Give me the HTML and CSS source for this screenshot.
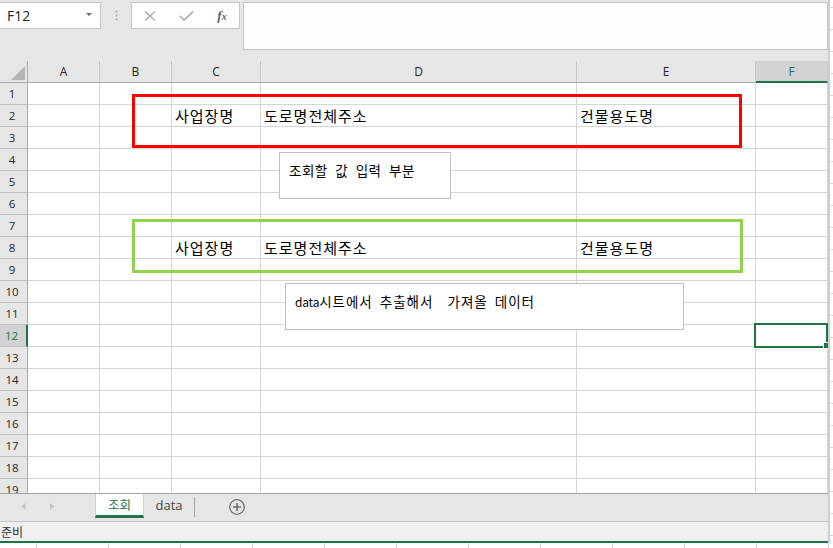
FILE: index.html
```html
<!DOCTYPE html>
<html lang="ko">
<head>
<meta charset="utf-8">
<title>조회 - Excel</title>
<link rel="stylesheet" href="styles.css">
</head>
<body>
<div class="screen">
  <div class="window">
    <div class="main">
      <div class="formula-bar">
        <div class="name-box"><span class="name">F12</span><span class="caret"></span></div>
        <div class="grip">
          <svg width="3" height="12" viewBox="0 0 3 12"><circle cx="1.5" cy="1.5" r="1" fill="#a9a9a9"/><circle cx="1.5" cy="5.5" r="1" fill="#a9a9a9"/><circle cx="1.5" cy="9.5" r="1" fill="#a9a9a9"/></svg>
        </div>
        <div class="fx-box">
          <svg class="ico" width="12" height="10" viewBox="0 0 12 10"><path d="M1 0.5 L11 9.5 M11 0.5 L1 9.5" stroke="#a6a6a6" stroke-width="1.3" fill="none"/></svg>
          <svg class="ico" width="15" height="10" viewBox="0 0 15 10"><path d="M0.8 5 L5 9 L14.2 0.6" stroke="#a6a6a6" stroke-width="1.5" fill="none"/></svg>
          <span class="fx">f<small>x</small></span>
        </div>
        <div class="formula-input"></div>
      </div>

      <div class="sheet">
        <div class="corner"><span class="corner-tri"></span></div>
        <div class="ch">A</div><div class="ch">B</div><div class="ch">C</div><div class="ch">D</div><div class="ch">E</div><div class="ch sel">F</div>

        <div class="rh">1</div><div class="c"></div><div class="c"></div><div class="c"></div><div class="c"></div><div class="c"></div><div class="c"></div>
        <div class="rh">2</div><div class="c"></div><div class="c"></div><div class="c t">사업장명</div><div class="c t">도로명전체주소</div><div class="c t">건물용도명</div><div class="c"></div>
        <div class="rh">3</div><div class="c"></div><div class="c"></div><div class="c"></div><div class="c"></div><div class="c"></div><div class="c"></div>
        <div class="rh">4</div><div class="c"></div><div class="c"></div><div class="c"></div><div class="c"></div><div class="c"></div><div class="c"></div>
        <div class="rh">5</div><div class="c"></div><div class="c"></div><div class="c"></div><div class="c"></div><div class="c"></div><div class="c"></div>
        <div class="rh">6</div><div class="c"></div><div class="c"></div><div class="c"></div><div class="c"></div><div class="c"></div><div class="c"></div>
        <div class="rh">7</div><div class="c"></div><div class="c"></div><div class="c"></div><div class="c"></div><div class="c"></div><div class="c"></div>
        <div class="rh">8</div><div class="c"></div><div class="c"></div><div class="c t">사업장명</div><div class="c t">도로명전체주소</div><div class="c t">건물용도명</div><div class="c"></div>
        <div class="rh">9</div><div class="c"></div><div class="c"></div><div class="c"></div><div class="c"></div><div class="c"></div><div class="c"></div>
        <div class="rh">10</div><div class="c"></div><div class="c"></div><div class="c"></div><div class="c"></div><div class="c"></div><div class="c"></div>
        <div class="rh">11</div><div class="c"></div><div class="c"></div><div class="c"></div><div class="c"></div><div class="c"></div><div class="c"></div>
        <div class="rh sel">12</div><div class="c"></div><div class="c"></div><div class="c"></div><div class="c"></div><div class="c"></div><div class="c"></div>
        <div class="rh">13</div><div class="c"></div><div class="c"></div><div class="c"></div><div class="c"></div><div class="c"></div><div class="c"></div>
        <div class="rh">14</div><div class="c"></div><div class="c"></div><div class="c"></div><div class="c"></div><div class="c"></div><div class="c"></div>
        <div class="rh">15</div><div class="c"></div><div class="c"></div><div class="c"></div><div class="c"></div><div class="c"></div><div class="c"></div>
        <div class="rh">16</div><div class="c"></div><div class="c"></div><div class="c"></div><div class="c"></div><div class="c"></div><div class="c"></div>
        <div class="rh">17</div><div class="c"></div><div class="c"></div><div class="c"></div><div class="c"></div><div class="c"></div><div class="c"></div>
        <div class="rh">18</div><div class="c"></div><div class="c"></div><div class="c"></div><div class="c"></div><div class="c"></div><div class="c"></div>
        <div class="rh">19</div><div class="c"></div><div class="c"></div><div class="c"></div><div class="c"></div><div class="c"></div><div class="c"></div>

        <div class="outline red"></div>
        <div class="outline green"></div>
        <div class="note n1">조회할 값 입력 부분</div>
        <div class="note n2"><span class="latin">data</span>시트에서 추출해서  가져올 데이터</div>
        <div class="cursor"><span class="handle"></span></div>
      </div>

      <div class="tabs">
        <div class="nav">
          <svg width="95" height="26" viewBox="0 0 95 26"><polygon points="25.5,9 25.5,15.5 21,12.25" fill="#c4c4c4"/><polygon points="50,9 50,15.5 54.5,12.25" fill="#c4c4c4"/></svg>
        </div>
        <div class="tab active">조회</div>
        <div class="tab">data</div>
        <div class="tab-sep"></div>
        <div class="add">
          <svg width="18" height="18" viewBox="0 0 18 18"><circle cx="9" cy="9" r="7.3" stroke="#6f6f6f" stroke-width="1.3" fill="none"/><path d="M9 5 V13 M5 9 H13" stroke="#6f6f6f" stroke-width="1.6"/></svg>
        </div>
      </div>

      <div class="status">준비</div>
    </div>
    <div class="edge"></div>
  </div>
  <div class="bottom-strip"></div>
</div>
</body>
</html>
```

FILE: styles.css
```css
* { box-sizing: border-box; }
html, body { margin: 0; padding: 0; }
body {
  width: 833px;
  height: 548px;
  overflow: hidden;
  background: #ffffff;
  font-family: "Open Sans", "Noto Sans CJK KR", sans-serif;
  color: #222;
}

.screen { display: flex; flex-direction: column; width: 833px; height: 548px; }
.window { display: flex; height: 543px; }
.main { width: 828px; display: flex; flex-direction: column; }
.edge {
  width: 5px;
  border-left: 2px solid #cfcfcf;
  background: repeating-linear-gradient(to bottom, transparent 0 7px, #d6d6d6 7px 8px, transparent 8px 22px), #ffffff;
}
.bottom-strip {
  height: 5px;
  background: repeating-linear-gradient(to right, transparent 0 36px, #d2d2d2 36px 37px, transparent 37px 72px), #ffffff;
}

/* formula bar */
.formula-bar {
  height: 61px;
  flex: none;
  background: #e6e6e6;
  display: flex;
  align-items: flex-start;
  padding-top: 2px;
}
.name-box {
  width: 102px;
  margin-left: -1px;
  height: 27px;
  background: #ffffff;
  border: 1px solid #c6c6c6;
  display: flex;
  align-items: center;
  justify-content: space-between;
  padding: 0 8px 0 7px;
}
.name { font-size: 14px; color: #222; line-height: 1; }
.caret {
  width: 0; height: 0;
  border-left: 3px solid transparent;
  border-right: 3px solid transparent;
  border-top: 3.5px solid #6d6d6d;
  margin-top: -3px;
}
.grip {
  width: 30px;
  height: 27px;
  display: flex;
  align-items: center;
  justify-content: center;
}
.fx-box {
  width: 109px;
  height: 27px;
  background: #ffffff;
  border: 1px solid #c6c6c6;
  display: grid;
  grid-template-columns: 36px 36px 36px;
  align-items: center;
  justify-items: center;
}
.ico { display: block; margin-top: 1px; }
.fx {
  font-family: "Liberation Serif", serif;
  font-style: italic;
  font-weight: bold;
  font-size: 13px;
  color: #5e5e5e;
  line-height: 1;
  margin-top: -1px;
}
.fx small { font-size: 10px; }
.formula-input {
  flex: 1;
  margin-left: 3px;
  height: 48px;
  background: #fdfdfd;
  border: 1px solid #c6c6c6;
}

/* sheet grid */
.sheet {
  position: relative;
  height: 432px;
  flex: none;
  overflow: hidden;
  display: grid;
  grid-template-columns: 28px 72px 72px 89px 316px 179px 72px;
  grid-auto-rows: 22px;
  background: #ffffff;
}
.corner {
  background: #e6e6e6;
  border-right: 1px solid #ababab;
  border-bottom: 1px solid #ababab;
  display: flex;
  align-items: flex-end;
  justify-content: flex-end;
  padding: 0 2px 2px 0;
}
.corner-tri {
  width: 0; height: 0;
  border-left: 14px solid transparent;
  border-bottom: 14px solid #b5b5b5;
}
.ch {
  background: #e6e6e6;
  border-right: 1px solid #c8c8c8;
  border-bottom: 1px solid #ababab;
  font-size: 12px;
  color: #262626;
  text-align: center;
  line-height: 21px;
}
.ch.sel {
  background: #d2d2d2;
  color: #217346;
  border-bottom: 2px solid #217346;
}
.rh {
  background: #e6e6e6;
  border-right: 1px solid #ababab;
  border-bottom: 1px solid #c2c2c2;
  font-size: 11.5px;
  color: #262626;
  text-align: center;
  padding-right: 3px;
  line-height: 21px;
}
.rh.sel {
  background: #d2d2d2;
  color: #217346;
  border-right: 2px solid #217346;
}
.c {
  border-right: 1px solid #d4d4d4;
  border-bottom: 1px solid #d4d4d4;
}
.t {
  font-family: "Noto Sans CJK KR", sans-serif;
  font-size: 15px;
  letter-spacing: 1px;
  line-height: 21px;
  color: #000;
  padding-left: 3px;
  white-space: nowrap;
}

/* overlays on the sheet */
.outline {
  position: absolute;
  left: 132px;
  height: 54px;
  border: 3px solid;
}
.outline.red { top: 33px; width: 610px; border-color: #ff0000; }
.outline.green { top: 158px; width: 611px; border-color: #92d050; }
.note {
  position: absolute;
  height: 47px;
  background: #ffffff;
  border: 1px solid #bfbfbf;
  padding: 8px 9px;
  font-family: "Noto Sans CJK KR", sans-serif;
  font-size: 13.5px;
  letter-spacing: 0.5px;
  line-height: 18px;
  color: #000;
  white-space: pre;
  word-spacing: 3.2px;
}
.note .latin { font-size: 12px; letter-spacing: -0.2px; }
.n1 { left: 279px; top: 91px; width: 172px; }
.n2 { left: 285px; top: 222px; width: 399px; letter-spacing: 0.95px; word-spacing: 2.4px; }
.cursor {
  position: absolute;
  left: 754px;
  top: 262px;
  width: 74px;
  height: 25px;
  border: 2px solid #217346;
}
.handle {
  position: absolute;
  left: 67px;
  top: 17px;
  width: 7px;
  height: 7px;
  background: #217346;
  border: 1px solid #ffffff;
}

/* sheet tabs */
.tabs {
  height: 28px;
  flex: none;
  background: #e6e6e6;
  border-top: 1px solid #a3a3a3;
  display: flex;
  align-items: flex-start;
}
.nav { width: 95px; height: 26px; }
.nav svg { display: block; }
.tab {
  width: 49px;
  height: 24px;
  font-family: "Noto Sans CJK KR", "Open Sans", sans-serif;
  font-size: 12.5px;
  line-height: 22px;
  text-align: center;
  color: #444;
}
.tab.active {
  background: #ffffff;
  color: #217346;
  border-left: 1px solid #d0d0d0;
  border-right: 1px solid #d0d0d0;
  border-bottom: 3px solid #217346;
}
.tab:not(.active) {
  width: 50px;
  font-family: "Open Sans", sans-serif;
  font-size: 13px;
}
.tab-sep {
  width: 1px;
  height: 20px;
  margin-top: 3px;
  background: #a6a6a6;
}
.add {
  margin-left: 33px;
  height: 26px;
  display: flex;
  align-items: center;
}
.add svg { display: block; }

/* status bar */
.status {
  height: 22px;
  flex: none;
  background: #f0f0f0;
  border-top: 1px solid #c6c6c6;
  border-bottom: 2px solid #217346;
  font-family: "Noto Sans CJK KR", sans-serif;
  font-size: 12px;
  line-height: 19px;
  color: #333;
  padding-left: 1px;
}
```
